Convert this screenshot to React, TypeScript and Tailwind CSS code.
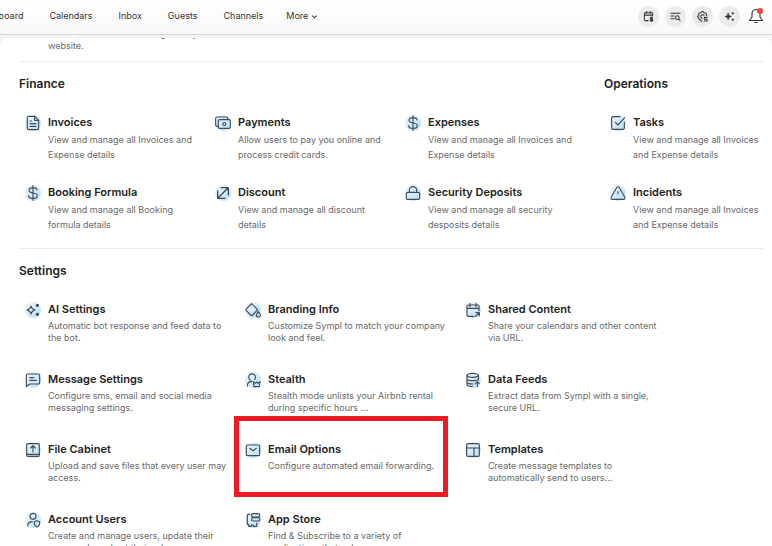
import type { ReactNode } from "react";

type IconName = keyof typeof ICONS;

type Item = {
  icon: IconName;
  title: string;
  text: string;
  highlighted?: boolean;
};

const ICONS = {
  invoice: (
    <>
      <path d="M14.500 2H5.500A2 2 0 0 0 3.500 4v16a2 2 0 0 0 2 2h13a2 2 0 0 0 2-2V8z" />
      <path d="M14.500 2v6h6M7.500 9h2.500M7.500 13h9M7.500 17h9" />
    </>
  ),
  payments: (
    <>
      <path d="M4 17H3a2 2 0 0 1-2-2V5a2 2 0 0 1 2-2h14a2 2 0 0 1 2 2v1" />
      <rect x="5" y="7" width="18" height="13" rx="2" />
      <circle cx="14" cy="13.500" r="2.200" />
    </>
  ),
  dollar: (
    <path d="M12 1v22M18 7.500C18 5 15.500 4 12 4S6 5 6 8s2.500 3.600 6 4 6.500 1 6.500 4-3 4-6.500 4-6.500-1.200-6.500-4" />
  ),
  discount: <path d="M5 19 19 5M9 4h11v11M4 9v11h11" strokeWidth="2" />,
  lock: (
    <>
      <rect x="2" y="11" width="20" height="10.500" rx="2" />
      <path d="M6.500 11V8a5.500 5.500 0 0 1 11 0v3" />
    </>
  ),
  task: (
    <>
      <path d="M15 2.500H4.500a2 2 0 0 0-2 2v15a2 2 0 0 0 2 2h15a2 2 0 0 0 2-2V11" />
      <path d="m8 11 4 4L22 4" />
    </>
  ),
  incident: (
    <>
      <path d="M10.300 3.500 1.800 18.500a2 2 0 0 0 1.700 3h17a2 2 0 0 0 1.700-3L13.700 3.500a2 2 0 0 0-3.400 0z" />
      <path d="M12 10v3" />
    </>
  ),
  sparkle: (
    <>
      <path d="M9 6c.8 3.800 2.200 5.200 6 6-3.800.8-5.200 2.200-6 6-.8-3.800-2.200-5.200-6-6 3.800-.8 5.200-2.200 6-6z" />
      <circle cx="18.500" cy="5" r="1.600" fill="currentColor" />
      <circle cx="18.500" cy="18.500" r="1.600" fill="currentColor" />
    </>
  ),
  message: (
    <>
      <path d="M4 3h16a2 2 0 0 1 2 2v11a2 2 0 0 1-2 2H7l-5 4V5a2 2 0 0 1 2-2z" />
      <path d="M7 8.500h6M7 12.500h10" />
    </>
  ),
  upload: (
    <>
      <rect x="2.500" y="2.500" width="19" height="19" rx="1.500" />
      <path d="M3 18.500h18M12 15V6M8.500 9 12 5.500 15.500 9" />
    </>
  ),
  userShield: (
    <>
      <circle cx="12" cy="6.500" r="4.500" />
      <path d="M4 21c0-4 2.500-6.500 7-6.500M14 14.500l4-1.500 4 1.500v3c0 2.500-1.800 4-4 5-2.200-1-4-2.500-4-5z" />
    </>
  ),
  paint: (
    <>
      <path d="m10 2.500 9 9-7.500 8a2 2 0 0 1-2.800 0L2 13a2 2 0 0 1 0-2.800L9.500 3" />
      <path d="M20 14.500c2 2.500 3 3.500 3 5a3 3 0 0 1-6 0c0-1.500 1-2.500 3-5z" />
    </>
  ),
  stealth: (
    <>
      <path d="M8 12a5 5 0 1 1 6.500-1M3.500 21c0-4.500 2-7 7-7" />
      <path d="m12.500 14.500 1 7.500h8l1-7.500-3 2.500-2-2-2 2z" />
    </>
  ),
  email: (
    <>
      <rect x="2" y="4.500" width="20" height="16" rx="1.500" />
      <path d="m7 9.500 5 3.500 5-3.500" />
    </>
  ),
  store: (
    <>
      <path d="M7.500 3.500h-2a2 2 0 0 0-2 2v13h2v3h4v-2h3v2h5v-5" />
      <rect x="10" y="2.500" width="12" height="5" rx="2" />
      <rect x="10" y="8.500" width="12" height="5" rx="2" />
    </>
  ),
  calendarShare: (
    <>
      <path d="M13 21.500H5a2 2 0 0 1-2-2v-13a2 2 0 0 1 2-2h14a2 2 0 0 1 2 2V13M3 9.500h18M7.500 2v5M16.500 2v5" />
      <path d="m15.500 22 5.500-5.500M16.500 16h5v5" />
    </>
  ),
  data: (
    <>
      <ellipse cx="11.500" cy="5" rx="8.500" ry="3" />
      <path d="M3 5v14c0 1.500 3 2.500 8 2.500M20 5v7M3 10c0 4 17 4 17 0M3 15c0 2 4 3 9 3M18.500 22v-7M15.500 17.500l3-3 3 3" />
    </>
  ),
  template: (
    <>
      <rect x="2.500" y="2.500" width="19" height="19" rx="1.500" />
      <path d="M2.500 9h19M13.500 9v12.500" />
    </>
  ),
};

const FINANCE: Item[] = [
  { icon: "invoice", title: "Invoices", text: "View and manage all Invoices and Expense details" },
  { icon: "payments", title: "Payments", text: "Allow users to pay you online and process credit cards." },
  { icon: "dollar", title: "Expenses", text: "View and manage all Invoices and Expense details" },
  { icon: "dollar", title: "Booking Formula", text: "View and manage all Booking formula details" },
  { icon: "discount", title: "Discount", text: "View and manage all discount details" },
  { icon: "lock", title: "Security Deposits", text: "View and manage all security desposits details" },
];

const OPERATIONS: Item[] = [
  { icon: "task", title: "Tasks", text: "View and manage all Invoices and Expense details" },
  { icon: "incident", title: "Incidents", text: "View and manage all Invoices and Expense details" },
];

const SETTINGS: Item[] = [
  { icon: "sparkle", title: "AI Settings", text: "Automatic bot response and feed data to the bot." },
  { icon: "paint", title: "Branding Info", text: "Customize Sympl to match your company look and feel." },
  { icon: "calendarShare", title: "Shared Content", text: "Share your calendars and other content via URL." },
  { icon: "message", title: "Message Settings", text: "Configure sms, email and social media messaging settings." },
  { icon: "stealth", title: "Stealth", text: "Stealth mode unlists your Airbnb rental during specific hours ..." },
  { icon: "data", title: "Data Feeds", text: "Extract data from Sympl with a single, secure URL." },
  { icon: "upload", title: "File Cabinet", text: "Upload and save files that every user may access." },
  { icon: "email", title: "Email Options", text: "Configure automated email forwarding.", highlighted: true },
  { icon: "template", title: "Templates", text: "Create message templates to automatically send to users..." },
  { icon: "userShield", title: "Account Users", text: "Create and manage users, update their passwords and set their roles." },
  { icon: "store", title: "App Store", text: "Find & Subscribe to a variety of applications that enhance your experience." },
];

const NAV = ["Dashboard", "Calendars", "Inbox", "Guests", "Channels"];

function Svg({ className, children }: { className: string; children: ReactNode }) {
  return (
    <svg
      className={className}
      viewBox="0 0 24 24"
      fill="none"
      stroke="currentColor"
      strokeWidth="1.700"
      strokeLinecap="round"
      strokeLinejoin="round"
      aria-hidden="true"
    >
      {children}
    </svg>
  );
}

function Entry({ item, dense }: { item: Item; dense?: boolean }) {
  return (
    <a href="#" className="relative flex items-start gap-[7px]">
      <span className="flex size-4 shrink-0 items-center justify-center rounded-full bg-linear-to-br from-[#eef8ff] to-[#b5defb] text-[#434a51]">
        <Svg className="size-4">{ICONS[item.icon]}</Svg>
      </span>
      <span className="min-w-0">
        <span className="block text-[11px] leading-[14px] font-semibold whitespace-nowrap text-[#222]">
          {item.title}
        </span>
        <span
          className={
            dense
              ? "mt-1 block max-w-[180px] text-[9px] leading-3 text-[#6a6a6a]"
              : "mt-[3px] block max-w-[150px] text-[9px] leading-[15px] text-[#6a6a6a]"
          }
        >
          {item.text}
        </span>
      </span>
      {item.highlighted && (
        <span className="pointer-events-none absolute -top-[26px] -left-[11px] h-[81px] w-[214px] border-[5px] border-[#ed1c24]" />
      )}
    </a>
  );
}

function Heading({ children }: { children: ReactNode }) {
  return <h2 className="text-[12px] leading-4 font-semibold text-[#222]">{children}</h2>;
}

function RoundButton({ label, children }: { label: string; children: ReactNode }) {
  return (
    <button
      type="button"
      aria-label={label}
      className="flex size-[21px] items-center justify-center rounded-full bg-[#ebebeb] text-[#333]"
    >
      <Svg className="size-[11px]">{children}</Svg>
    </button>
  );
}

function Header() {
  return (
    <header className="flex h-[35px] shrink-0 items-center justify-between border-b border-[#d5d8d6] bg-linear-to-b from-white to-[#f8f8f8] pr-2 pb-[2px]">
      <nav className="-ml-[23px] flex items-center gap-[26px] text-[9px] text-[#333]">
        {NAV.map((label) => (
          <a key={label} href="#">
            {label}
          </a>
        ))}
        <button type="button" className="-ml-[3px] flex items-center gap-[3px]">
          More
          <svg className="size-[7px]" viewBox="0 0 8 8" fill="none" stroke="currentColor" strokeWidth="1.200">
            <path d="m1.500 3 2.500 2.500L6.500 3" />
          </svg>
        </button>
      </nav>
      <div className="flex items-center gap-[6px]">
        <RoundButton label="Bookings">
          <path d="M11 21H5a2 2 0 0 1-2-2V6a2 2 0 0 1 2-2h14a2 2 0 0 1 2 2v5M3 9h18M8 1v4M16 1v4M18 13v10M21 15h-5v3h5v3h-5" strokeWidth="2.200" />
        </RoundButton>
        <RoundButton label="Search list">
          <path d="M2 5h20M2 11h7M2 17h7M19 18l3 3" strokeWidth="2.200" />
          <circle cx="16" cy="14.500" r="4" strokeWidth="2.200" />
        </RoundButton>
        <RoundButton label="Rates">
          <path d="M11 22H9l-1-3-4-1v-3l-3-3 3-3V5l4-1 3-3h2l3 3 4 1v3l2 3M11 16a4 4 0 1 1 5-5M22 14h-6v4h6v4h-6" strokeWidth="2.200" />
        </RoundButton>
        <RoundButton label="Assistant">
          <path d="M9 5c.8 4.800 2.200 6.200 7 7-4.800.8-6.200 2.200-7 7-.8-4.800-2.200-6.200-7-7 4.800-.8 6.200-2.200 7-7z" fill="currentColor" />
          <circle cx="19" cy="5" r="1.500" fill="currentColor" />
          <circle cx="19" cy="19" r="1.500" fill="currentColor" />
        </RoundButton>
        <button type="button" aria-label="Notifications" className="relative ml-[2px] text-[#333]">
          <svg className="size-4" viewBox="0 0 16 16" fill="none" stroke="currentColor" strokeWidth="1.100" strokeLinejoin="round">
            <path d="M8 1.500C5.200 1.500 4 3.500 4 6v3l-2.500 3.500h13L12 9V6c0-2.500-1.200-4.500-4-4.500zM6.500 14.500h3" />
          </svg>
          <span className="absolute top-0 right-px size-[6px] rounded-full bg-[#f44336]" />
        </button>
      </div>
    </header>
  );
}

export default function App() {
  return (
    <div className="flex h-screen flex-col overflow-hidden bg-[#f4f4f4] font-['Inter',sans-serif]">
      <Header />
      <main className="mt-[3px] min-h-0 flex-1 overflow-hidden rounded-t-lg bg-white pr-2 pl-[19px]">
        <p className="-mt-[10px] border-b border-[#ebebeb] pb-[9px] pl-[29px] text-[9px] leading-3 text-[#6a6a6a]">
          Embed, host or run <a href="#" className="text-[#3b6fb5]">bookings easily</a>
          <br />
          website.
        </p>

        <div className="grid grid-cols-[585fr_160fr] border-b border-[#ebebeb] pt-[14px] pb-4">
          <section>
            <Heading>Finance</Heading>
            <div className="mt-[23px] grid grid-cols-3 gap-y-[23px] pr-[9px] pl-[6px]">
              {FINANCE.map((item) => (
                <Entry key={item.title} item={item} />
              ))}
            </div>
          </section>
          <section>
            <Heading>Operations</Heading>
            <div className="mt-[23px] grid gap-y-[23px] pl-[6px]">
              {OPERATIONS.map((item) => (
                <Entry key={item.title} item={item} />
              ))}
            </div>
          </section>
        </div>

        <section className="pt-[14px]">
          <Heading>Settings</Heading>
          <div className="mt-[23px] grid grid-cols-3 gap-y-7 pr-[79px] pl-[6px]">
            {SETTINGS.map((item) => (
              <Entry key={item.title} item={item} dense />
            ))}
          </div>
        </section>
      </main>
    </div>
  );
}
